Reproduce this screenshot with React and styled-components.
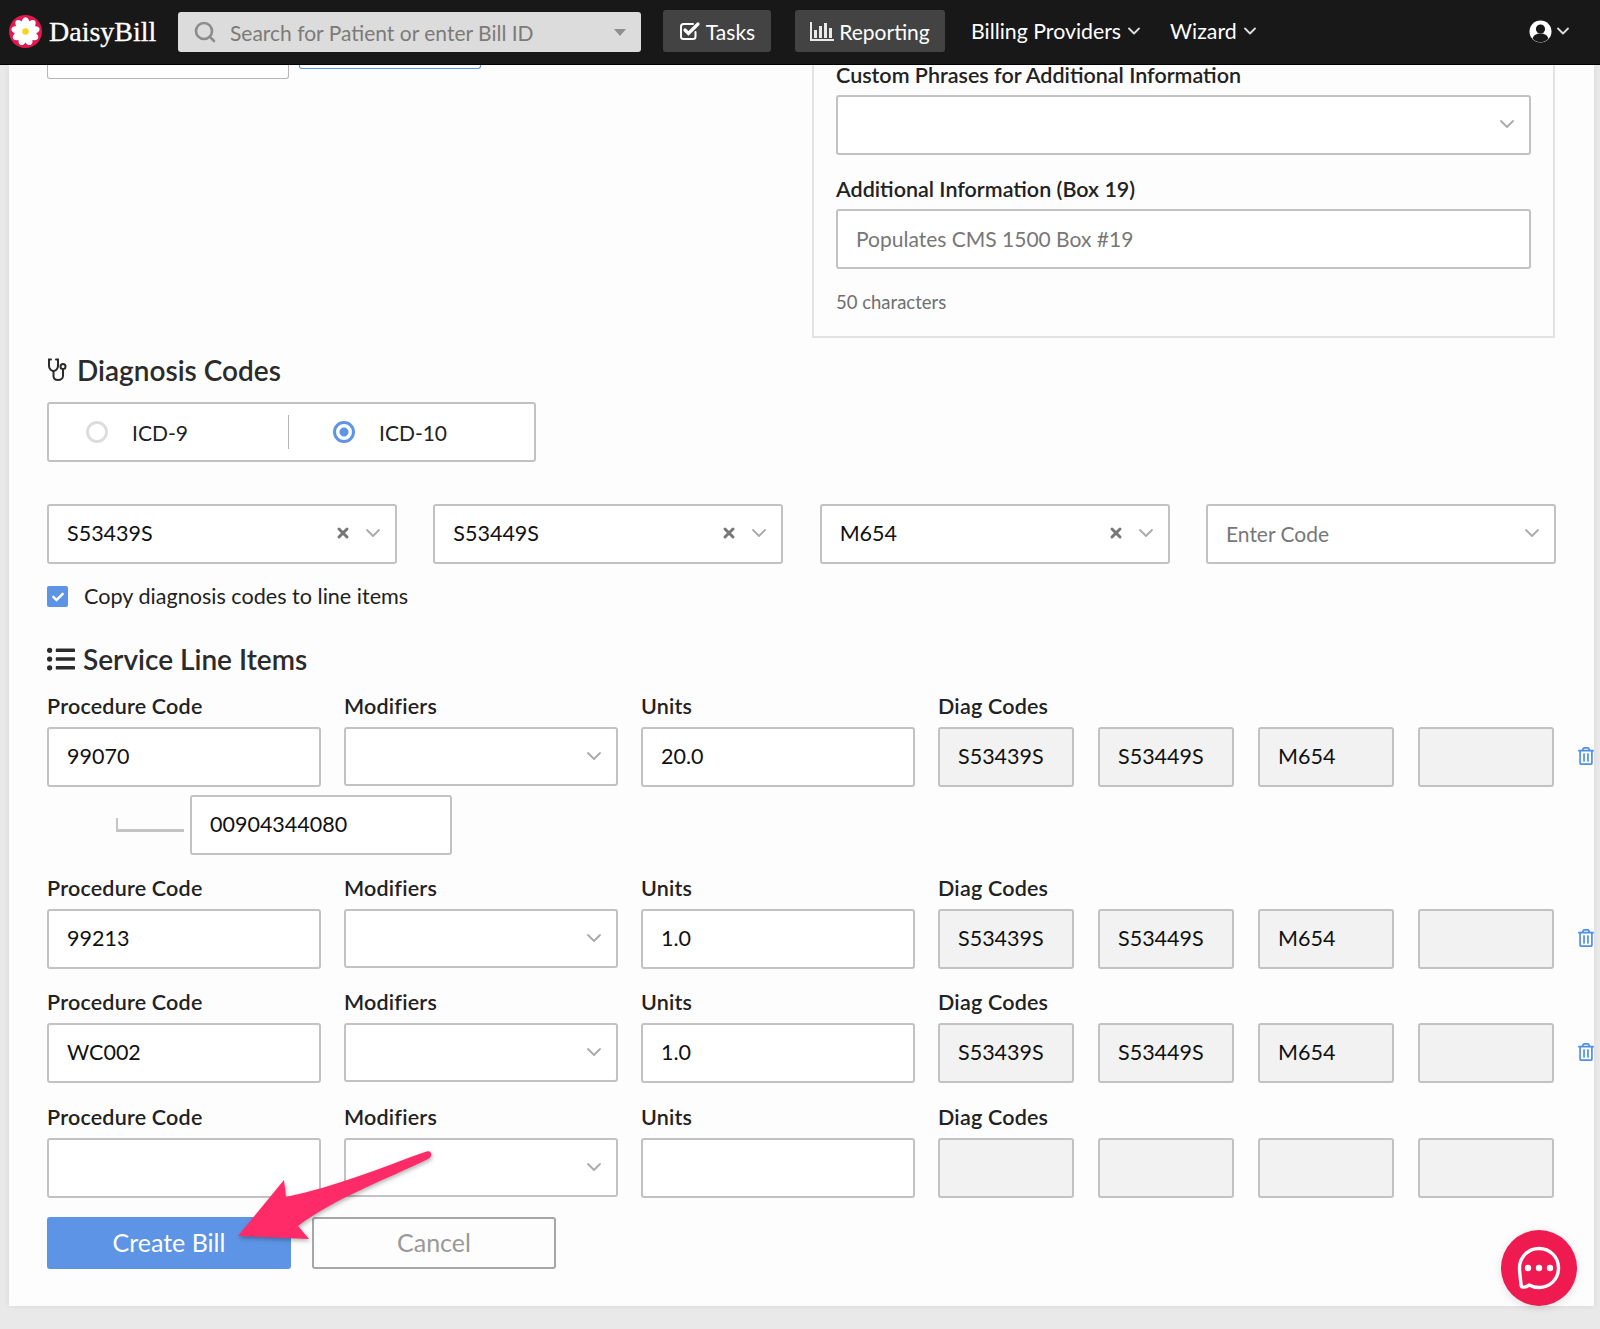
import React from "react";
import styled, { createGlobalStyle } from "styled-components";
import { Search, ChevronDown, X } from "lucide-react";
import { FaListUl, FaRegTrashAlt, FaCheck } from "react-icons/fa";

const GlobalStyle = createGlobalStyle`
  html, body {
    margin: 0;
    padding: 0;
    background: #e9e9e9;
  }
  body {
    font-family: Lato, "Open Sans", sans-serif;
    color: #222;
  }
`;

const Page = styled.div`
  width: 1600px;
  height: 1329px;
  overflow: hidden;
  position: relative;
`;

const Navbar = styled.nav`
  height: 65px;
  box-sizing: border-box;
  background: #181818;
  border-bottom: 1px solid #000;
  display: flex;
  align-items: center;
  padding: 0 27px 0 9px;
  position: relative;
  z-index: 2;
`;

const Brand = styled.div`
  width: 169px;
  margin-top: -1px;
  display: flex;
  align-items: center;
  gap: 7px;
  font-family: "Liberation Serif", serif;
  font-size: 28px;
  color: #fff;
  -webkit-text-stroke: 0.3px #fff;
`;

const SearchBox = styled.div`
  width: 463px;
  height: 40px;
  margin-right: 22px;
  background: #dcdcdc;
  border-radius: 3px;
  display: flex;
  align-items: center;
  padding: 0 15px;
  box-sizing: border-box;
  color: #7d7a78;
  font-size: 21px;
  svg { margin-right: 13px; color: #8c8c8c; }
`;

const SearchText = styled.span`
  flex: 1;
`;

const Caret = styled.span`
  width: 0;
  height: 0;
  border-left: 6.5px solid transparent;
  border-right: 6.5px solid transparent;
  border-top: 7px solid #8f8f8f;
`;

const NavButton = styled.div`
  height: 42px;
  width: ${(p) => p.$width}px;
  margin-right: ${(p) => p.$gap}px;
  margin-top: -2px;
  box-sizing: border-box;
  display: flex;
  align-items: center;
  justify-content: center;
  gap: 5px;
  background: #434343;
  border-radius: 3px;
  color: #fff;
  font-size: 21px;
`;

const NavLink = styled.div`
  display: flex;
  align-items: center;
  gap: 3px;
  margin-top: -2px;
  margin-right: 26px;
  color: #fff;
  font-size: 21.3px;
  svg { color: #ddd; }
`;

const UserMenu = styled.div`
  margin-left: auto;
  margin-top: -2px;
  display: flex;
  align-items: center;
  gap: 1px;
  svg.chev { color: #ddd; }
`;

const Panel = styled.main`
  position: absolute;
  top: 65px;
  left: 9px;
  width: 1585px;
  height: 1241px;
  box-sizing: border-box;
  padding: 0 38px;
  background: #fdfdfd;
  box-shadow: 0 0 6px rgba(0, 0, 0, 0.08);
  overflow: hidden;
`;

const TopArea = styled.div`
  display: flex;
  justify-content: space-between;
  height: 273px;
`;

const ClippedButtons = styled.div`
  display: flex;
  align-items: flex-start;
  gap: 10px;
`;

const ClippedStub = styled.div`
  width: ${(p) => p.$width}px;
  height: ${(p) => p.$height}px;
  box-sizing: border-box;
  background: #fff;
  border: 1px solid ${(p) => p.$color};
  border-top: none;
  border-radius: 0 0 3px 3px;
`;

const InfoBox = styled.section`
  width: 743px;
  box-sizing: border-box;
  border: 2px solid #e3e3e3;
  border-top: none;
  padding: 0 22px;
  margin-right: 1px;
`;

const Label = styled.label`
  display: block;
  font-size: 21.5px;
  line-height: 20px;
  font-weight: 600;
  letter-spacing: 0.2px;
  color: #222;
`;

const InfoLabel = styled(Label)`
  margin-bottom: 10px;
  letter-spacing: 0;
`;

const Field = styled.div`
  box-sizing: border-box;
  height: ${(p) => p.$height || 60}px;
  width: ${(p) => (p.$width ? `${p.$width}px` : "auto")};
  display: flex;
  align-items: center;
  padding: 0 18px 2px;
  background: ${(p) => (p.$disabled ? "#f2f2f2" : "#fff")};
  border: 2px solid #c2c2c2;
  border-radius: 3px;
  font-size: ${(p) => (p.$placeholder ? 21 : 21.5)}px;
  color: ${(p) => (p.$placeholder ? "#777" : "#111")};
`;

const SelectControls = styled.span`
  margin-left: auto;
  margin-right: -8px;
  display: flex;
  align-items: center;
  gap: 10px;
`;

const SelectChevron = styled(ChevronDown)`
  color: #aaa;
`;

const ClearIcon = styled(X)`
  color: #777;
`;

const InfoSelect = styled(Field)`
  margin-bottom: 24px;
`;

const Hint = styled.div`
  margin-top: 24px;
  font-size: 18.5px;
  line-height: 18px;
  color: #6f6f6f;
`;

const SectionTitle = styled.h2`
  display: flex;
  align-items: center;
  gap: ${(p) => p.$gap}px;
  margin: 0 0 ${(p) => p.$below}px;
  height: 30px;
  box-sizing: border-box;
  padding-bottom: 2px;
  font-size: 28px;
  font-weight: 600;
  color: #2b2b2b;
`;

const DiagnosisSection = styled.section`
  margin-top: 18px;
`;

const RadioBox = styled.div`
  width: 489px;
  height: 60px;
  box-sizing: border-box;
  display: flex;
  align-items: center;
  background: #fff;
  border: 2px solid #c2c2c2;
  border-radius: 3px;
`;

const RadioOption = styled.div`
  flex: ${(p) => (p.$first ? "0 0 239px" : "1")};
  height: 34px;
  display: flex;
  align-items: center;
  gap: 24px;
  padding-left: ${(p) => p.$pad}px;
  box-sizing: border-box;
  font-size: 21px;
  color: #222;
  & + & { border-left: 1px solid #b5b5b5; }
`;

const RadioDot = styled.span`
  width: 22px;
  height: 22px;
  box-sizing: border-box;
  border-radius: 50%;
  border: 3px solid ${(p) => (p.$on ? "#5d94e6" : "#ddd")};
  background: ${(p) => (p.$on ? "radial-gradient(circle, #5d94e6 0 4px, #fff 5px)" : "#fff")};
`;

const CodeRow = styled.div`
  margin-top: 42px;
  display: grid;
  grid-template-columns: repeat(4, 350px);
  justify-content: space-between;
`;

const CopyRow = styled.div`
  margin-top: 22px;
  display: flex;
  align-items: center;
  gap: 16px;
  font-size: 21.6px;
  line-height: 21px;
  color: #222;
`;

const CheckBox = styled.span`
  width: 21px;
  height: 21px;
  border-radius: 2px;
  background: #5d94e6;
  color: #fff;
  display: flex;
  align-items: center;
  justify-content: center;
`;

const ServiceSection = styled.section`
  margin-top: 38px;
`;

const LineItem = styled.div`
  display: grid;
  grid-template-columns: 274px 274px 274px 1fr;
  column-gap: 23px;
  margin-top: ${(p) => p.$top}px;
  position: relative;
`;

const LabelSlot = styled(Label)`
  margin: -1px 0 11px;
`;

const DiagGrid = styled.div`
  display: grid;
  grid-template-columns: repeat(4, 136px);
  column-gap: 24px;
`;

const ElbowRow = styled.div`
  display: flex;
  align-items: flex-start;
  margin-top: 8px;
  padding-left: 69px;
`;

const Elbow = styled.div`
  width: 68px;
  height: 14px;
  margin-top: 23px;
  margin-right: 6px;
  box-sizing: border-box;
  border-left: 2px solid #c4c4c4;
  border-bottom: 3px solid #c4c4c4;
`;

const TrashButton = styled.span`
  position: absolute;
  right: -39px;
  bottom: 22px;
  color: #4f8fe8;
  display: flex;
`;

const Actions = styled.div`
  margin-top: 19px;
  display: flex;
  gap: 21px;
`;

const Button = styled.button`
  width: 244px;
  height: 52px;
  box-sizing: border-box;
  padding: 0 0 3px;
  border-radius: 3px;
  font-family: inherit;
  font-size: 25px;
  background: ${(p) => (p.$primary ? "#5d94e6" : "#fdfdfd")};
  color: ${(p) => (p.$primary ? "#fff" : "#999")};
  border: ${(p) => (p.$primary ? "none" : "2px solid #a6a6a6")};
`;

const ArrowMark = styled.svg`
  position: absolute;
  left: 230px;
  top: 1145px;
  z-index: 3;
  filter: drop-shadow(1px 2px 2px rgba(0, 0, 0, 0.3));
`;

const ChatBubble = styled.div`
  position: absolute;
  left: 1501px;
  top: 1230px;
  width: 76px;
  height: 76px;
  border-radius: 50%;
  background: #ee1a50;
  display: flex;
  align-items: center;
  justify-content: center;
  box-shadow: 0 2px 8px rgba(0, 0, 0, 0.12);
  z-index: 3;
`;

const petals = [0, 40, 80, 120, 160, 200, 240, 280, 320];

const DaisyLogo = () => (
  <svg width="33" height="33" viewBox="0 0 33 33">
    <circle cx="16.5" cy="16.5" r="16.5" fill="#e5174d" />
    {petals.map((a) => (
      <ellipse key={a} cx="16.5" cy="8.500" rx="4" ry="6.300" fill="#fff" transform={`rotate(${a} 16.5 16.5)`} />
    ))}
    <circle cx="16.5" cy="16.5" r="3.200" fill="#f8d512" />
  </svg>
);

const CheckSquareIcon = () => (
  <svg width="22" height="22" viewBox="0 0 22 22" fill="none" stroke="#fff" strokeLinecap="round">
    <path d="M16.500 12v4.500a2.500 2.500 0 0 1-2.500 2.500H4.500A2.500 2.500 0 0 1 2 16.500V6.500A2.500 2.500 0 0 1 4.500 4H14" strokeWidth="2" />
    <path d="M6 10l3.500 3.500L19 4" strokeWidth="3.200" />
  </svg>
);

const BarsIcon = () => (
  <svg width="24" height="20" viewBox="0 0 24 20" fill="#e8e8e8">
    <rect x="0" y="1" width="2" height="19" />
    <rect x="0" y="18" width="24" height="2" />
    <rect x="4" y="9" width="3" height="8" />
    <rect x="9" y="5" width="3" height="12" />
    <rect x="14" y="2" width="3" height="15" />
    <rect x="19" y="7" width="3" height="10" />
  </svg>
);

const UserIcon = () => (
  <svg width="23" height="23" viewBox="0 0 23 23">
    <circle cx="11.5" cy="11.5" r="11" fill="#fff" />
    <circle cx="11.5" cy="9" r="4.600" fill="#181818" />
    <path d="M3.600 18.400c1-3.600 4-5 7.900-5s6.900 1.400 7.900 5a10 10 0 0 1-15.800 0z" fill="#181818" />
  </svg>
);

const StethoscopeIcon = () => (
  <svg width="22" height="24" viewBox="0 0 22 24" fill="none" stroke="#2b2b2b" strokeWidth="2" strokeLinecap="round">
    <path d="M4 1.500H2V8c0 3 2.500 5 4.500 5S11 11 11 8V1.500H9" />
    <path d="M6.500 13v5c0 2.500 2 4 4.500 4s5-1.500 5-4v-7" />
    <circle cx="16" cy="8.500" r="2.500" />
  </svg>
);

const ChatIcon = () => (
  <svg width="48" height="48" viewBox="0 0 48 48" fill="none">
    <path
      d="M24 4.500c11 0 19.500 8.500 19.500 19.500S35 43.500 24 43.500c-3.500 0-7-1-10-2.600-1.500 1.400-3.500 2.300-6 2.200-1.300 0-1.800-.8-1.900-2-.4-5.500-1.600-11-1.600-17.100C4.500 13 13 4.500 24 4.500z"
      stroke="#fff"
      strokeWidth="3.400"
      strokeLinejoin="round"
    />
    <circle cx="13" cy="24" r="3.200" fill="#fff" />
    <circle cx="24" cy="24" r="3.200" fill="#fff" />
    <circle cx="35" cy="24" r="3.200" fill="#fff" />
  </svg>
);

const diagnosisCodes = ["S53439S", "S53449S", "M654"];

const lineItems = [
  { code: "99070", units: "20.0", ndc: "00904344080", diag: diagnosisCodes, top: 0 },
  { code: "99213", units: "1.0", diag: diagnosisCodes, top: 24 },
  { code: "WC002", units: "1.0", diag: diagnosisCodes, top: 24 },
  { code: "", units: "", diag: [], top: 25, noTrash: true },
];

const ServiceLine = ({ item }) => (
  <>
    <LineItem $top={item.top}>
      <div>
        <LabelSlot>Procedure Code</LabelSlot>
        <Field>{item.code}</Field>
      </div>
      <div>
        <LabelSlot>Modifiers</LabelSlot>
        <Field $height={59}>
          <SelectControls>
            <SelectChevron size={24} strokeWidth={1.8} />
          </SelectControls>
        </Field>
      </div>
      <div>
        <LabelSlot>Units</LabelSlot>
        <Field>{item.units}</Field>
      </div>
      <div>
        <LabelSlot>Diag Codes</LabelSlot>
        <DiagGrid>
          {[0, 1, 2, 3].map((i) => (
            <Field key={i} $disabled>
              {item.diag[i]}
            </Field>
          ))}
        </DiagGrid>
      </div>
      {!item.noTrash && (
        <TrashButton>
          <FaRegTrashAlt size={18} />
        </TrashButton>
      )}
    </LineItem>
    {item.ndc && (
      <ElbowRow>
        <Elbow />
        <Field $width={262}>{item.ndc}</Field>
      </ElbowRow>
    )}
  </>
);

export default function App() {
  return (
    <Page>
      <GlobalStyle />
      <Navbar>
        <Brand>
          <DaisyLogo />
          DaisyBill
        </Brand>
        <SearchBox>
          <Search size={24} strokeWidth={2.6} />
          <SearchText>Search for Patient or enter Bill ID</SearchText>
          <Caret />
        </SearchBox>
        <NavButton $width={108} $gap={24}>
          <CheckSquareIcon />
          Tasks
        </NavButton>
        <NavButton $width={150} $gap={26}>
          <BarsIcon />
          Reporting
        </NavButton>
        <NavLink>
          Billing Providers
          <ChevronDown size={20} strokeWidth={2.2} />
        </NavLink>
        <NavLink>
          Wizard
          <ChevronDown size={20} strokeWidth={2.2} />
        </NavLink>
        <UserMenu>
          <UserIcon />
          <ChevronDown className="chev" size={20} strokeWidth={2.2} />
        </UserMenu>
      </Navbar>

      <Panel>
        <TopArea>
          <ClippedButtons>
            <ClippedStub $width={242} $height={14} $color="#b5b5b5" />
            <ClippedStub $width={182} $height={4} $color="#5d94e6" />
          </ClippedButtons>
          <InfoBox>
            <InfoLabel>Custom Phrases for Additional Information</InfoLabel>
            <InfoSelect>
              <SelectControls>
                <SelectChevron size={24} strokeWidth={1.8} />
              </SelectControls>
            </InfoSelect>
            <InfoLabel>Additional Information (Box 19)</InfoLabel>
            <Field $placeholder>Populates CMS 1500 Box #19</Field>
            <Hint>50 characters</Hint>
          </InfoBox>
        </TopArea>

        <DiagnosisSection>
          <SectionTitle $gap={8} $below={16}>
            <StethoscopeIcon />
            Diagnosis Codes
          </SectionTitle>
          <RadioBox>
            <RadioOption $first $pad={37}>
              <RadioDot />
              ICD-9
            </RadioOption>
            <RadioOption $pad={44}>
              <RadioDot $on />
              ICD-10
            </RadioOption>
          </RadioBox>
          <CodeRow>
            {diagnosisCodes.map((code) => (
              <Field key={code}>
                {code}
                <SelectControls>
                  <ClearIcon size={16} strokeWidth={4.5} />
                  <SelectChevron size={24} strokeWidth={1.8} />
                </SelectControls>
              </Field>
            ))}
            <Field $placeholder>
              Enter Code
              <SelectControls>
                <SelectChevron size={24} strokeWidth={1.8} />
              </SelectControls>
            </Field>
          </CodeRow>
          <CopyRow>
            <CheckBox>
              <FaCheck size={12} />
            </CheckBox>
            Copy diagnosis codes to line items
          </CopyRow>
        </DiagnosisSection>

        <ServiceSection>
          <SectionTitle $gap={8} $below={22}>
            <FaListUl size={28} />
            Service Line Items
          </SectionTitle>
          {lineItems.map((item, i) => (
            <ServiceLine key={i} item={item} />
          ))}
        </ServiceSection>

        <Actions>
          <Button $primary>Create Bill</Button>
          <Button>Cancel</Button>
        </Actions>
      </Panel>

      <ArrowMark width="210" height="100" viewBox="230 1145 210 100">
        <path
          d="M431 1153 Q432 1157 428 1159 C385 1180 335 1198 298 1226 L309 1239 L238 1236 L284 1180 L286 1197 C335 1187 380 1168 425 1152 Q430 1150 431 1153 Z"
          fill="#ff2a68"
        />
      </ArrowMark>

      <ChatBubble>
        <ChatIcon />
      </ChatBubble>
    </Page>
  );
}
